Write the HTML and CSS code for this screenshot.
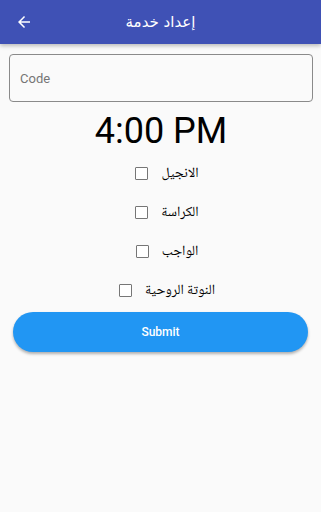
FILE: index.html
```html
<!DOCTYPE html>
<html lang="ar">
<head>
<meta charset="utf-8">
<link rel="stylesheet" href="styles.css">
</head>
<body>
<header class="appbar">
  <svg class="back" width="18" height="18" viewBox="0 0 24 24"><path d="M20 11H7.83l5.59-5.59L12 4l-8 8 8 8 1.41-1.41L7.83 13H20v-2z" fill="#fff"/></svg>
  <div class="title">إعداد خدمة</div>
</header>
<main class="content">
  <div class="field"><span class="placeholder">Code</span></div>
  <div class="time">4:00 PM</div>
  <div class="checks">
    <label class="row"><span class="box"></span><span class="lbl">الانجيل</span></label>
    <label class="row"><span class="box"></span><span class="lbl">الكراسة</span></label>
    <label class="row"><span class="box"></span><span class="lbl">الواجب</span></label>
    <label class="row"><span class="box"></span><span class="lbl">النوتة الروحية</span></label>
  </div>
  <button class="submit">Submit</button>
</main>
</body>
</html>
```
FILE: styles.css
```css
html, body { margin: 0; padding: 0; }
body {
  background: #fafafa;
  font-family: Roboto, "Noto Sans", sans-serif;
  width: 321px;
  height: 512px;
  overflow: hidden;
}
.appbar {
  height: 44px;
  background: #3f51b5;
  display: flex;
  align-items: center;
  position: relative;
  box-shadow: 0 2px 4px rgba(0,0,0,0.25);
}
.back { margin-left: 15px; }
.title {
  position: absolute;
  left: 0; right: 0;
  text-align: center;
  color: #fff;
  font-size: 15px;
  font-family: "DejaVu Sans", sans-serif;
  pointer-events: none;
}
.content {
  padding: 10px 8px 0 9px;
  display: flex;
  flex-direction: column;
}
.field {
  height: 46px;
  border: 1px solid #8a8a8a;
  border-radius: 4px;
  display: flex;
  align-items: center;
  padding-left: 10px;
}
.placeholder { color: #757575; font-size: 13px; }
.time {
  text-align: center;
  font-size: 36px;
  color: #000;
  margin-top: 8px;
  line-height: 42px;
}
.checks {
  display: flex;
  flex-direction: column;
  align-items: center;
  margin-top: 2px;
  padding-left: 12px;
}
.row {
  display: flex;
  align-items: center;
  height: 39px;
  gap: 13px;
}
.box {
  width: 11px;
  height: 11px;
  border: 1px solid #767676;
  border-radius: 1px;
  background: #fff;
}
.lbl {
  font-family: "Noto Naskh Arabic", "Amiri", "Liberation Serif", "DejaVu Serif", serif;
  font-size: 14px;
  color: #000;
}
.submit {
  margin: 2px 5px 0 4px;
  height: 40px;
  border: none;
  border-radius: 20px;
  background: #2196f3;
  color: #fff;
  font-family: Roboto, sans-serif;
  font-weight: 500;
  font-size: 12px;
  box-shadow: 0 2px 3px rgba(0,0,0,0.3);
}
```
